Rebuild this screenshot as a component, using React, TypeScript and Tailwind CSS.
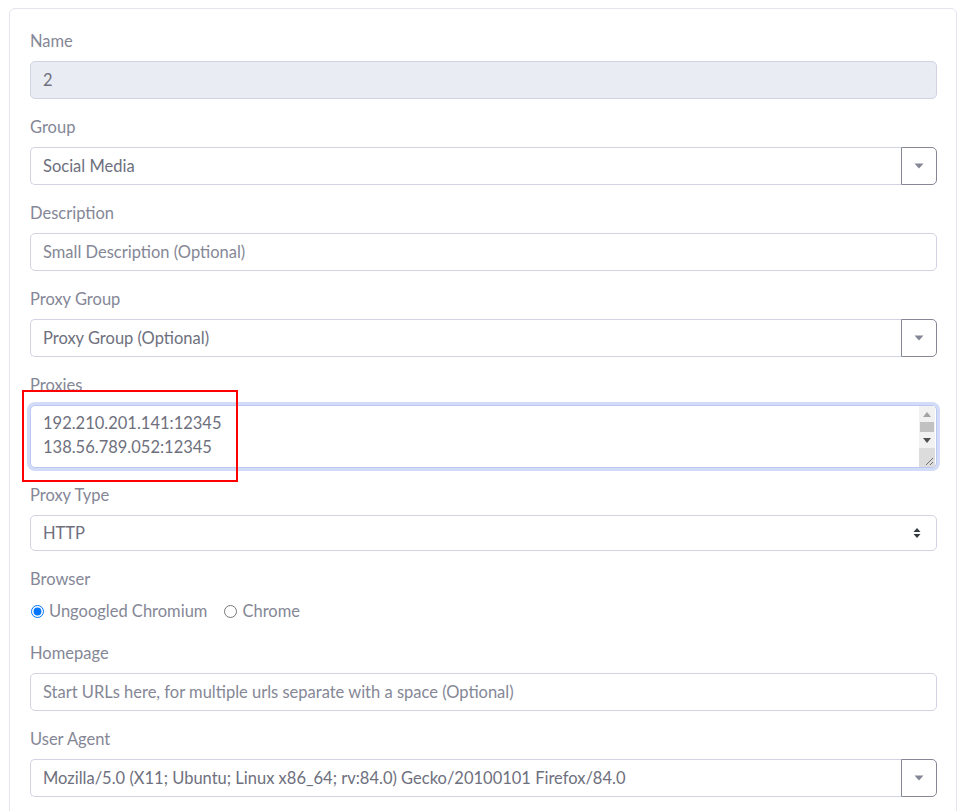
// Shared styles for the form controls
const labelCls = 'block text-[16.5px] leading-6 text-[#858796] mb-2';
const inputCls =
  'h-[38px] w-full rounded-[5px] border border-[#d1d3e2] px-3 text-[16.5px] text-[#6e707e] placeholder:text-[#858796] outline-none';

const Caret = () => (
  <svg width="10" height="6" viewBox="0 0 10 6">
    <path d="M0.5 0.5h9L5 5.5z" fill="#858796" />
  </svg>
);

function Field({ label, className = 'mb-4', children }: { label: string; className?: string; children: React.ReactNode }) {
  return (
    <div className={className}>
      <label className={labelCls}>{label}</label>
      {children}
    </div>
  );
}

// Input with the dropdown button on the right
function ComboInput({ value, placeholder }: { value?: string; placeholder?: string }) {
  return (
    <div className="flex h-[38px]">
      <input
        readOnly
        defaultValue={value}
        placeholder={placeholder}
        className="h-full min-w-0 flex-1 rounded-l-[5px] border border-r-0 border-[#d1d3e2] bg-white px-3 text-[16.5px] text-[#6e707e] placeholder:text-[#6e707e] outline-none"
      />
      <button className="flex h-full w-9 items-center justify-center rounded-r-[5px] border border-[#858796] bg-white">
        <Caret />
      </button>
    </div>
  );
}

export default function App() {
  return (
    <div
      className="min-h-screen bg-white pl-[9px] pt-[8px]"
      style={{ fontFamily: 'Lato, "Noto Sans", sans-serif' }}
    >
      <div className="w-[948px] rounded-md border border-[#e3e6f0] pl-5 pr-[19px] pt-5 pb-4">
        <Field label="Name">
          <input readOnly defaultValue="2" className={`${inputCls} bg-[#eaecf4]`} />
        </Field>

        <Field label="Group">
          <ComboInput value="Social Media" />
        </Field>

        <Field label="Description">
          <input readOnly placeholder="Small Description (Optional)" className={`${inputCls} bg-white`} />
        </Field>

        <Field label="Proxy Group">
          <ComboInput placeholder="Proxy Group (Optional)" />
        </Field>

        <div className="relative mb-[15px]">
          <label className={labelCls}>Proxies</label>
          <div className="relative">
            <textarea
              readOnly
              defaultValue={'192.210.201.141:12345\n138.56.789.052:12345'}
              className="block h-[63px] w-full resize-none overflow-hidden rounded-[5px] border border-[#bac8f3] bg-white px-3 pt-[5px] pb-[6px] text-[16.5px] leading-6 text-[#6e707e] shadow-[0_0_0_3px_rgba(78,115,223,0.25)] outline-none"
            />
            {/* classic scrollbar + resize grip */}
            <div className="absolute right-[2px] top-[1px] bottom-[1px] flex w-[16px] flex-col bg-[#f1f1f1]">
              <div className="flex h-[16px] items-center justify-center">
                <svg width="8" height="5" viewBox="0 0 8 5">
                  <path d="M4 0L8 5H0z" fill="#a3a3a3" />
                </svg>
              </div>
              <div className="mx-[1px] h-[10px] bg-[#c1c1c1]" />
              <div className="flex h-[16px] items-center justify-center">
                <svg width="8" height="5" viewBox="0 0 8 5">
                  <path d="M0 0H8L4 5z" fill="#505050" />
                </svg>
              </div>
              <div className="relative flex-1 bg-[#dcdcdc]">
                <svg className="absolute right-[1px] bottom-[1px]" width="10" height="10" viewBox="0 0 10 10">
                  <path d="M9 2L2 9M9 6L6 9" stroke="#6e6e6e" strokeWidth="1" />
                </svg>
              </div>
            </div>
          </div>
          <div className="pointer-events-none absolute -left-2 top-[17px] h-[92px] w-[216px] border-2 border-[#ff0000]" />
        </div>

        <Field label="Proxy Type">
          <div className="flex h-9 items-center justify-between rounded-[5px] border border-[#d1d3e2] bg-white px-3 text-[16.5px] text-[#6e707e]">
            <span>HTTP</span>
            <svg width="8" height="12" viewBox="0 0 8 12" className="mr-[3px]">
              <path d="M4 1L7.5 5H0.5z M4 11L0.5 7H7.5z" fill="#343a40" />
            </svg>
          </div>
        </Field>

        <Field label="Browser" className="mb-[18px]">
          <div className="flex h-6 items-center text-[16.5px] text-[#858796]">
            <label className="mr-[17px] flex items-center">
              <input type="radio" name="browser" defaultChecked className="m-0 mr-[5px] ml-[1px] h-[13px] w-[13px]" />
              Ungoogled Chromium
            </label>
            <label className="flex items-center">
              <input type="radio" name="browser" className="m-0 mr-[5px] h-[13px] w-[13px]" />
              Chrome
            </label>
          </div>
        </Field>

        <Field label="Homepage">
          <input
            readOnly
            placeholder="Start URLs here, for multiple urls separate with a space (Optional)"
            className={`${inputCls} bg-white`}
          />
        </Field>

        <Field label="User Agent">
          <ComboInput value="Mozilla/5.0 (X11; Ubuntu; Linux x86_64; rv:84.0) Gecko/20100101 Firefox/84.0" />
        </Field>
      </div>
    </div>
  );
}
